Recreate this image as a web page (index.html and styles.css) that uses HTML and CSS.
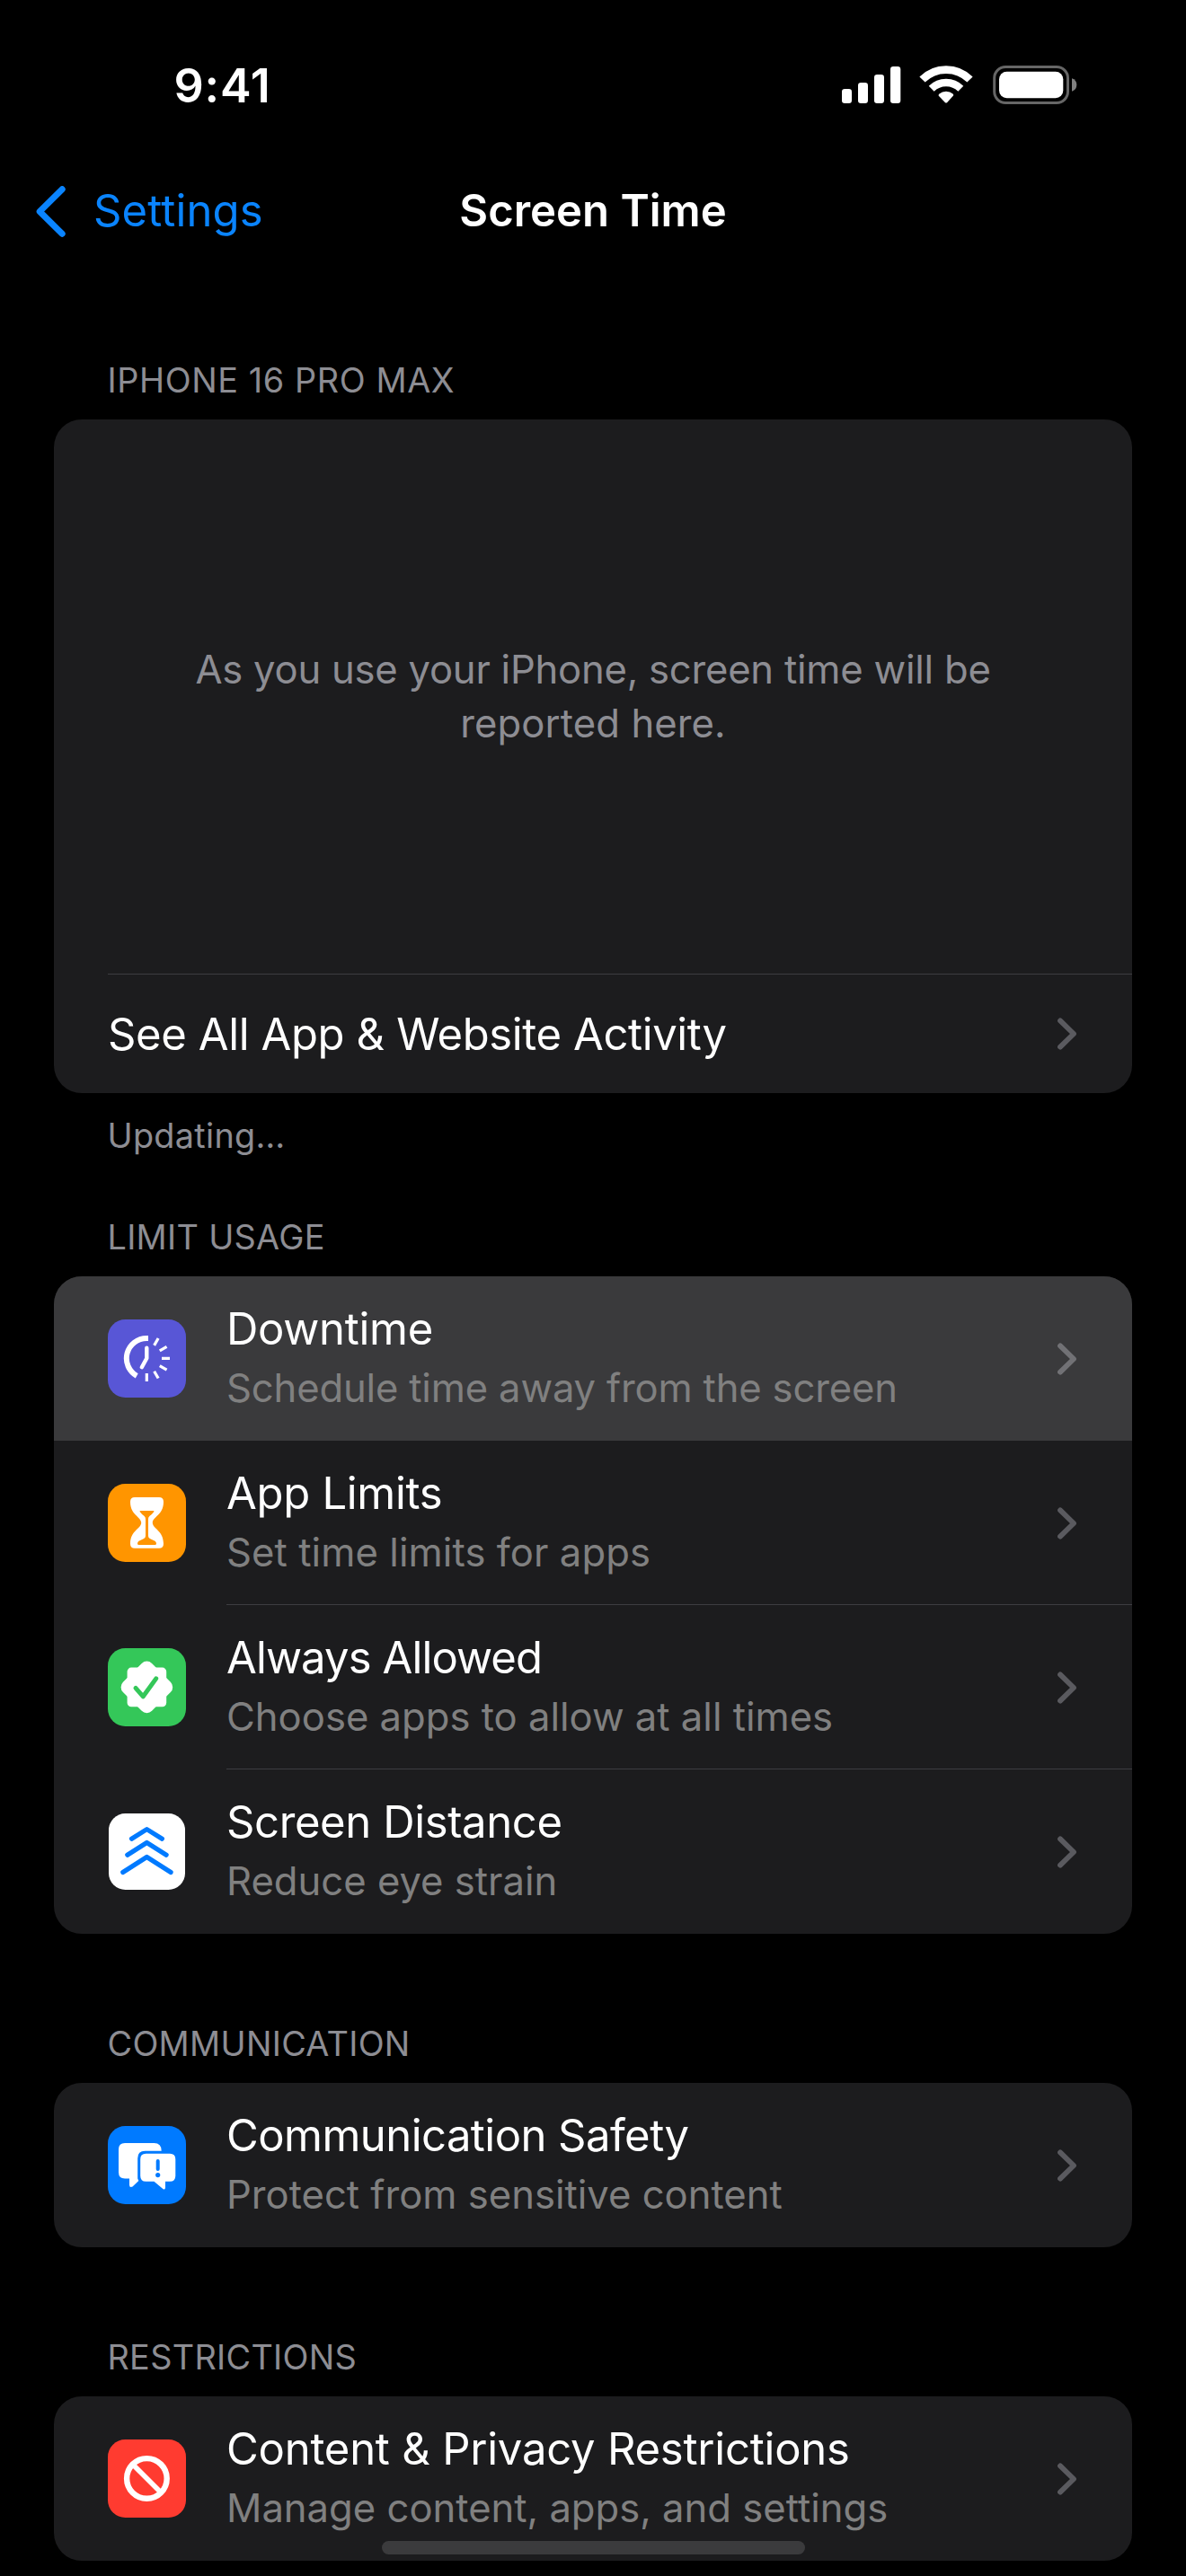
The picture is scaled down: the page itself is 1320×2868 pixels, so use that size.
FILE: index.html
```html
<!DOCTYPE html>
<html lang="en">
<head>
<meta charset="utf-8">
<title>Screen Time</title>
<link rel="stylesheet" href="styles.css">
</head>
<body>
<svg class="defs" width="0" height="0" aria-hidden="true">
  <symbol id="chevron" viewBox="0 0 21 36">
    <path d="M3 3.4 L18 18 L3 32.6" fill="none" stroke="currentColor" stroke-width="5.8" stroke-linecap="round" stroke-linejoin="round"/>
  </symbol>
</svg>
<div class="screen">
  <header class="status-bar">
    <span class="time">9:41</span>
    <div class="indicators">
      <svg class="signal" width="66" height="44" viewBox="937 73 66 44" fill="#fff">
        <rect x="937" y="99" width="11" height="16" rx="3.2"/>
        <rect x="955" y="92" width="11" height="23" rx="3.2"/>
        <rect x="973" y="83" width="11" height="32" rx="3.2"/>
        <rect x="991" y="74" width="11.3" height="41" rx="3.2"/>
      </svg>
      <svg class="wifi" width="60" height="44" viewBox="-30 -42 60 44">
        <path d="M-26.5 -26.5 A37.5 37.5 0 0 1 26.5 -26.5" fill="none" stroke="#fff" stroke-width="8.8"/>
        <path d="M-16.3 -16.3 A23.1 23.1 0 0 1 16.3 -16.3" fill="none" stroke="#fff" stroke-width="8.4"/>
        <path d="M-8.4 -8.4 Q-8.6 -9.4 -7.6 -10.4 Q-4.5 -13.3 0 -13.3 Q4.5 -13.3 7.6 -10.4 Q8.6 -9.4 8 -8.4 L1 -0.8 Q0 0 -1 -0.8 Z" fill="#fff"/>
      </svg>
      <svg class="battery" width="94" height="44" viewBox="1105 73 94 44">
        <rect x="1106.7" y="74.5" width="81.8" height="40" rx="12.5" fill="none" stroke="#666" stroke-width="3"/>
        <rect x="1112" y="79.7" width="71.3" height="29.6" rx="8.5" fill="#fff"/>
        <path d="M1193 87.3 Q1198.3 89 1198.3 94.5 Q1198.3 100 1193 101.7 Z" fill="#808080"/>
      </svg>
    </div>
  </header>

  <nav class="nav-bar">
    <a class="back">
      <svg width="34" height="57" viewBox="0 0 34 57" fill="none" stroke="currentColor" stroke-width="7" stroke-linecap="round" stroke-linejoin="round"><path d="M29.2 3.7 L4.2 28.5 L29.2 53.3"/></svg>
      <span>Settings</span>
    </a>
    <h1 class="title">Screen Time</h1>
  </nav>

  <main>
    <section class="group group-device">
      <h2 class="label">IPHONE 16 PRO MAX</h2>
      <div class="card">
        <div class="empty">
          <p class="empty-first">As you use your iPhone, screen time will be</p>
          <p class="empty-last">reported here.</p>
        </div>
        <a class="row-single">
          <span>See All App &amp; Website Activity</span>
          <svg class="chevron" width="21" height="36"><use href="#chevron"/></svg>
        </a>
      </div>
      <p class="footer">Updating…</p>
    </section>

    <section class="group group-limit">
      <h2 class="label">LIMIT USAGE</h2>
      <div class="card">
        <a class="row downtime pressed">
          <svg class="tile" width="87" height="87" viewBox="0 0 87 87">
            <rect width="87" height="87" rx="19.5" fill="#5856d6"/>
            <path d="M45 20.9 H43.3 A22.4 22.4 0 0 0 32.2 62.8" fill="none" stroke="#fff" stroke-width="6"/>
            <path d="M43.3 31.8 V43.3 L37.8 53.2" fill="none" stroke="#fff" stroke-width="4.4" stroke-linecap="round" stroke-linejoin="round"/>
            <g stroke="#fff" stroke-width="3.2">
              <path id="tick" d="M60 43.3 H69"/>
              <use href="#tick" transform="rotate(-60 43.3 43.3)"/>
              <use href="#tick" transform="rotate(-30 43.3 43.3)"/>
              <use href="#tick" transform="rotate(30 43.3 43.3)"/>
              <use href="#tick" transform="rotate(60 43.3 43.3)"/>
              <use href="#tick" transform="rotate(90 43.3 43.3)"/>
            </g>
          </svg>
          <div class="text"><span class="name">Downtime</span><span class="detail">Schedule time away from the screen</span></div>
          <svg class="chevron" width="21" height="36"><use href="#chevron"/></svg>
        </a>
        <a class="row app-limits">
          <svg class="tile" width="87" height="87" viewBox="0 0 87 87">
            <rect width="87" height="87" rx="19.5" fill="#ff9500"/>
            <path fill="#fff" d="M30 15 H57 Q62 15 62 20 C62 35 49.8 36.5 49.8 43.3 C49.8 50 62 52 62 66.7 Q62 71.8 57 71.8 H30 Q25 71.8 25 66.7 C25 52 37.2 50 37.2 43.3 C37.2 36.5 25 35 25 20 Q25 15 30 15 Z"/>
            <path fill="#ff9500" d="M36.3 30 H50.7 Q52 30 51.2 31.2 Q49.3 33.8 46.6 35.8 Q45 37.2 45 39 V58 Q45 60.2 46.8 61 L52.5 63.8 Q54 64.8 54 66.5 Q54 68 52.4 68 H34.6 Q33 68 33 66.5 Q33 64.8 34.5 63.8 L40.2 61 Q42 60.2 42 58 V39 Q42 37.2 40.4 35.8 Q37.7 33.8 35.8 31.2 Q35 30 36.3 30 Z"/>
          </svg>
          <div class="text"><span class="name">App Limits</span><span class="detail">Set time limits for apps</span></div>
          <svg class="chevron" width="21" height="36"><use href="#chevron"/></svg>
        </a>
        <a class="row always-allowed">
          <svg class="tile" width="87" height="87" viewBox="0 0 87 87">
            <rect width="87" height="87" rx="19.5" fill="#34c759"/>
            <rect x="21.6" y="21.6" width="43.6" height="43.6" rx="4.5" fill="#fff"/>
            <rect x="20.7" y="20.7" width="45.4" height="45.4" rx="8" fill="#fff" transform="rotate(45 43.4 43.4)"/>
            <path d="M31 44.4 L39.3 53.8 L53.7 33.9" fill="none" stroke="#34c759" stroke-width="5" stroke-linecap="round" stroke-linejoin="round"/>
          </svg>
          <div class="text"><span class="name">Always Allowed</span><span class="detail">Choose apps to allow at all times</span></div>
          <svg class="chevron" width="21" height="36"><use href="#chevron"/></svg>
        </a>
        <a class="row screen-distance">
          <svg class="tile" width="87" height="87" viewBox="0 0 87 87">
            <rect x="1" y="1" width="85" height="85" rx="18.5" fill="#fff"/>
            <g fill="none" stroke="#007aff" stroke-width="5.2" stroke-linecap="round" stroke-linejoin="round">
              <path d="M26.5 29.2 L43.4 18.6 L60.4 29.2"/>
              <path d="M21.8 47.2 L43.4 33.5 L65.1 47.2"/>
              <path d="M16.8 66.5 L43.4 49.5 L70.1 66.5"/>
            </g>
          </svg>
          <div class="text"><span class="name">Screen Distance</span><span class="detail">Reduce eye strain</span></div>
          <svg class="chevron" width="21" height="36"><use href="#chevron"/></svg>
        </a>
      </div>
    </section>

    <section class="group group-communication">
      <h2 class="label">COMMUNICATION</h2>
      <div class="card">
        <a class="row communication-safety">
          <svg class="tile" width="87" height="87" viewBox="0 0 87 87">
            <rect width="87" height="87" rx="19.5" fill="#007aff"/>
            <path fill="#fff" d="M19 19 H51.5 Q59.7 19 59.7 27.7 H41.5 Q33.2 27.7 33.2 36 V58.5 L34.3 61 L27.5 67.6 Q24 69 24 65.5 V58.5 H19 Q12 58.5 12 51.5 V26 Q12 19 19 19 Z"/>
            <path fill="#fff" d="M42.5 30.7 H69 Q75.3 30.7 75.3 37 V55.5 Q75.3 61.8 69 61.8 H64 V68.5 Q64 71.5 61.3 70 L51.5 61.8 H42.5 Q36.2 61.8 36.2 55.5 V37 Q36.2 30.7 42.5 30.7 Z"/>
            <path d="M55.7 39 V48" stroke="#007aff" stroke-width="4" stroke-linecap="round"/>
            <circle cx="55.7" cy="54.6" r="2.6" fill="#007aff"/>
          </svg>
          <div class="text"><span class="name">Communication Safety</span><span class="detail">Protect from sensitive content</span></div>
          <svg class="chevron" width="21" height="36"><use href="#chevron"/></svg>
        </a>
      </div>
    </section>

    <section class="group group-restrictions">
      <h2 class="label">RESTRICTIONS</h2>
      <div class="card">
        <a class="row content-privacy">
          <svg class="tile" width="87" height="87" viewBox="0 0 87 87">
            <rect width="87" height="87" rx="19.5" fill="#ff3b30"/>
            <circle cx="43.4" cy="43.4" r="22.3" fill="none" stroke="#fff" stroke-width="6.4"/>
            <path d="M28 28 L58.8 58.8" stroke="#fff" stroke-width="5.6"/>
          </svg>
          <div class="text"><span class="name">Content &amp; Privacy Restrictions</span><span class="detail">Manage content, apps, and settings</span></div>
          <svg class="chevron" width="21" height="36"><use href="#chevron"/></svg>
        </a>
      </div>
    </section>
  </main>
  <div class="home-indicator"></div>
</div>
</body>
</html>
```
FILE: styles.css
```css
* { box-sizing: border-box; margin: 0; padding: 0; }

body {
  background: #000;
  color: #fff;
  font-family: Inter, "Liberation Sans", sans-serif;
  white-space: nowrap;
}

svg { display: block; flex: none; }
.defs { position: absolute; }

.screen {
  position: relative;
  width: 1320px;
  height: 2868px;
  overflow: hidden;
}

/* Status bar */
.status-bar {
  display: flex;
  justify-content: space-between;
  align-items: center;
  height: 190px;
  padding: 0 121px 0 193.5px;
}
.time {
  padding-top: 2px;
  font-size: 52px;
  font-weight: 600;
  line-height: 60px;
  letter-spacing: 0.8px;
}
.indicators { display: flex; align-items: center; }
.wifi { margin-left: 20.3px; }
.battery { margin-left: 21.7px; }

/* Navigation bar */
.nav-bar {
  display: grid;
  grid-template-columns: 1fr auto 1fr;
  align-items: center;
  height: 90px;
  padding: 0 40px;
  font-size: 49px;
  line-height: 60px;
}
.back {
  display: flex;
  align-items: center;
  gap: 30px;
  color: #0a84ff;
  letter-spacing: 0.15px;
}
.title { font-size: 49px; font-weight: 600; }

/* Grouped list */
.group { margin: 97px 60px 0; }
.group-device { margin-top: 118px; }
.group-limit { margin-top: 63px; }

.label, .footer {
  padding-left: 59.5px;
  color: #8d8d93;
  font-size: 37.8px;
  font-weight: 400;
  line-height: 50px;
}
.label { padding-bottom: 19px; height: 69px; letter-spacing: 0.3px; }
.group-device .label { letter-spacing: 0.6px; }
.footer { padding-top: 22px; height: 72px; letter-spacing: 0.3px; }

.card {
  overflow: hidden;
  border-radius: 31px;
  background: #1c1c1e;
}

.empty {
  display: flex;
  flex-direction: column;
  justify-content: center;
  height: 617px;
  color: #8d8d93;
  font-size: 43.6px;
  line-height: 60px;
  text-align: center;
}
.empty-first { letter-spacing: -0.23px; }
.empty-last { letter-spacing: 0.1px; }

.row-single {
  display: flex;
  align-items: center;
  justify-content: space-between;
  height: 133px;
  margin-left: 60px;
  padding-right: 62px;
  border-top: 1px solid #3d3d41;
  font-size: 49px;
  line-height: 60px;
  letter-spacing: -0.39px;
}
.row-single span { padding-top: 2px; }
.chevron { color: #5a5a5f; }

.row {
  display: grid;
  grid-template-columns: 87px 1fr;
  column-gap: 45px;
  align-items: center;
  position: relative;
  height: 183px;
  padding: 0 0 0 60px;
  grid-template-columns: 87px 1fr 21px;
  padding-right: 62px;
}
.row + .row::before {
  content: "";
  position: absolute;
  top: -1px;
  left: 192px;
  right: 0;
  height: 1px;
  background: #3d3d41;
}
.pressed { background: #3a3a3c; }
.pressed .chevron { color: #717175; }
.row.pressed + .row::before { display: none; }

.text { display: flex; flex-direction: column; }
.name { font-size: 49px; line-height: 66px; letter-spacing: -0.3px; }
.detail { color: #808080; font-size: 43.6px; line-height: 66px; }

.downtime .detail { letter-spacing: -0.17px; }
.app-limits .detail { letter-spacing: 0.08px; }
.always-allowed .name { letter-spacing: -0.89px; }
.screen-distance .name { letter-spacing: -0.38px; }
.communication-safety .name { letter-spacing: -0.55px; }
.content-privacy .name { letter-spacing: -0.22px; }

.home-indicator {
  position: absolute;
  left: 425px;
  bottom: 24px;
  width: 471px;
  height: 15px;
  border-radius: 8px;
  background: #3b3b3d;
}
```
